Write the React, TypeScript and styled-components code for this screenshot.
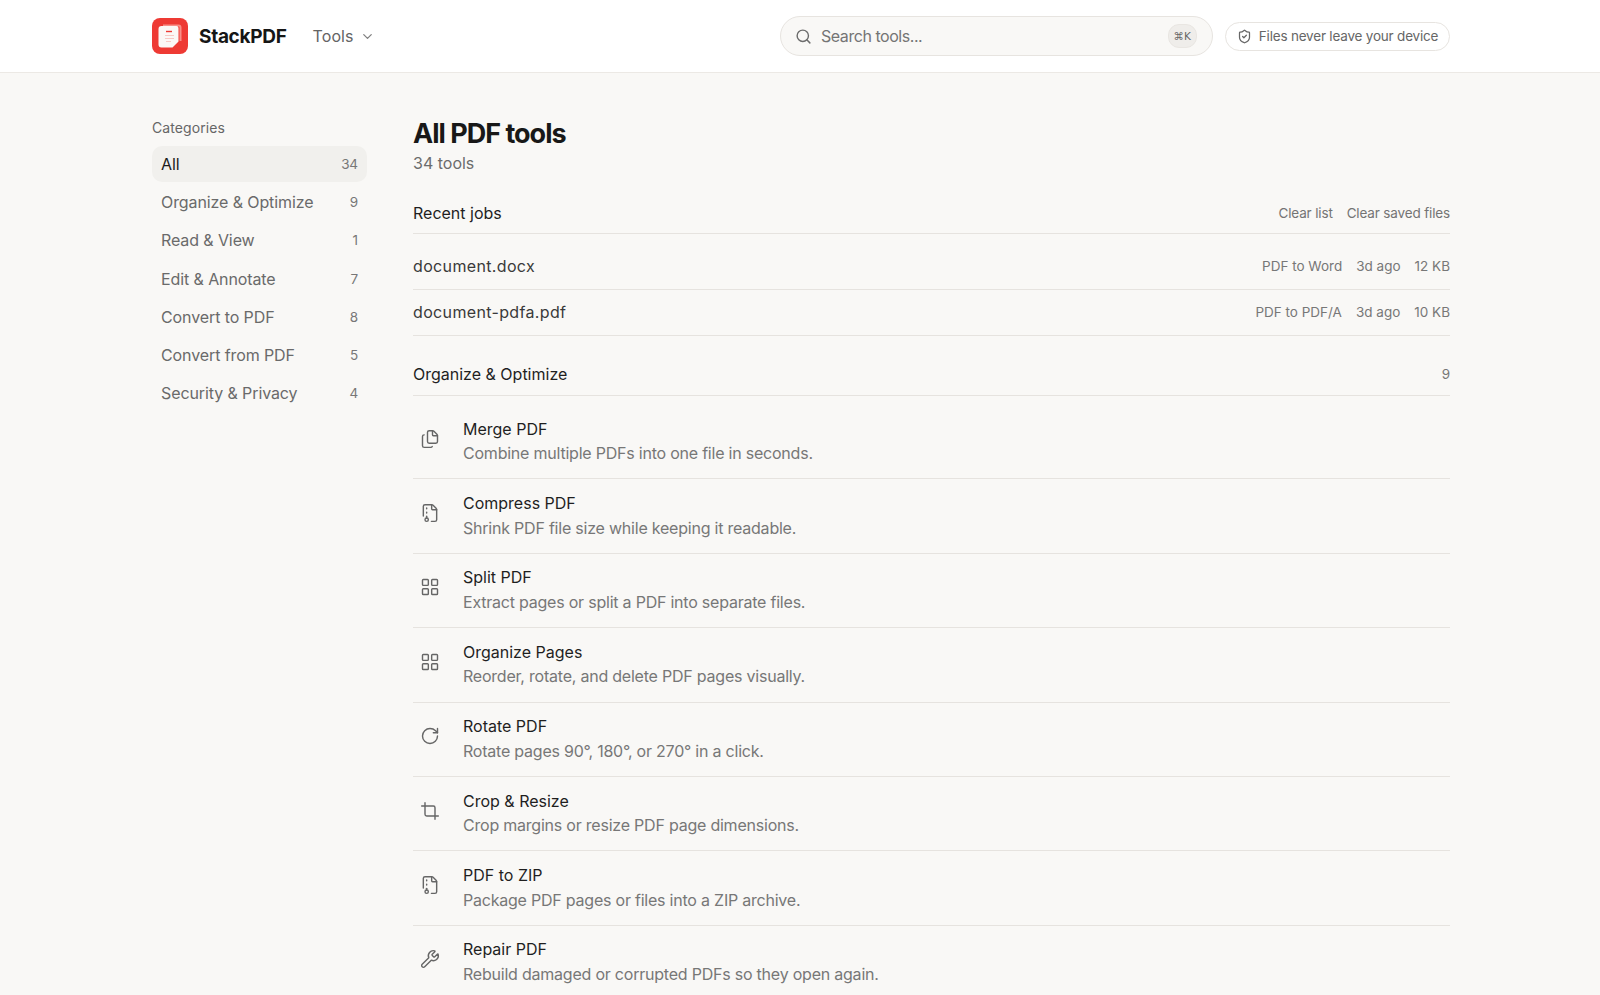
import React from "react";
import styled, { createGlobalStyle } from "styled-components";
import { Files, FileArchive, LayoutGrid, RotateCw, Crop, Wrench, Search, ChevronDown, ShieldCheck } from "lucide-react";

const Global = createGlobalStyle`
  html, body { margin: 0; padding: 0; height: 100%; overflow: hidden; background: #f9f8f6; }
  body { font-family: Inter, "Noto Sans", sans-serif; color: #1c1c1c; }
  #root { height: 995px; overflow: hidden; }
`;
const Header = styled.header`
  height: 73px; box-sizing: border-box; background: #fff; border-bottom: 1px solid #ece9e5;
  display: flex; align-items: center; padding-left: 152px;
`;
const HeaderInner = styled.div`
  width: 1298px; display: flex; align-items: center;
`;
const LogoMark = styled.svg`width: 36px; height: 36px; flex: none;`;
const Brand = styled.span`font-size: 19px; font-weight: 700; letter-spacing: -0.3px; margin-left: 11px; color: #161616;`;
const ToolsMenu = styled.button`
  all: unset; display: flex; align-items: center; gap: 6px; margin-left: 26px; font-size: 16px; color: #646464; letter-spacing: .1px;
`;
const Spacer = styled.div`flex: 1;`;
const SearchBox = styled.div`
  width: 433px; height: 40px; box-sizing: border-box; border: 1px solid #e7e4e0; border-radius: 20px; background: #f9f8f6;
  display: flex; align-items: center; padding: 0 15px 0 14px; color: #6c6c6c;
`;
const SearchText = styled.span`font-size: 16px; margin-left: 9px; flex: 1; color: #747474; letter-spacing: -.45px;`;
const Kbd = styled.span`
  font-family: "DejaVu Sans", sans-serif; font-size: 10.5px; font-weight: 500; color: #666; background: #efedea; border: 1px solid #e9e6e2; border-radius: 11px;
  height: 22px; padding: 0 5px; display: flex; align-items: center;
`;
const TrustPill = styled.div`
  margin-left: 12px; width: 225px; height: 29px; box-sizing: border-box; border: 1px solid #e7e4e0; border-radius: 15px; background: #fff;
  display: flex; align-items: center; justify-content: center; gap: 7px; font-size: 13.5px; letter-spacing: -.2px; color: #666;
`;
const Layout = styled.div`
  width: 1298px; margin-left: 152px; display: grid; grid-template-columns: 215px 1fr; column-gap: 46px; padding-top: 43px;
`;
const Sidebar = styled.aside`display: flex; flex-direction: column;`;
const SideTitle = styled.div`font-size: 14px; color: #666; line-height: 20px; margin-top: 2px; margin-bottom: 8px; letter-spacing: .1px;`;
const SideList = styled.nav`display: flex; flex-direction: column; gap: 2.2px;`;
const SideItem = styled.div<{ $active?: boolean }>`
  height: 36px; display: flex; align-items: center; justify-content: space-between; padding: 0 9px 0 9px; border-radius: 10px;
  font-size: 16px; letter-spacing: -.1px; color: ${p => (p.$active ? "#1c1c1c" : "#6a6a6a")}; background: ${p => (p.$active ? "#f1f0ed" : "transparent")};
`;
const Count = styled.span`font-size: 13.5px; color: #777;`;
const Main = styled.main`display: flex; flex-direction: column;`;
const Title = styled.h1`font-size: 27px; line-height: 36px; font-weight: 700; letter-spacing: -1px; margin: 0; color: #181818;`;
const Sub = styled.div`font-size: 16px; line-height: 24px; color: #6c6c6c; margin-top: -1px;`;
const SectionHead = styled.div<{ $mt: number; $top: number }>`
  margin-top: ${p => p.$mt}px; height: 44px; box-sizing: border-box; border-bottom: 1px solid #e6e3df;
  display: flex; align-items: center; justify-content: space-between; padding-top: ${p => p.$top}px;
`;
const SectionTitle = styled.div`font-size: 16px; color: #1f1f1f;`;
const Actions = styled.div`display: flex; gap: 14px; font-size: 13.5px; letter-spacing: -.15px; color: #747474;`;
const Job = styled.div`
  height: 46.5px; box-sizing: border-box; border-bottom: 1px solid #e6e3df; display: flex; align-items: center; justify-content: space-between;
`;
const FirstJobs = styled.div`padding-top: 9px;`;
const JobName = styled.div`font-size: 16px; letter-spacing: .35px; color: #3a3a3a;`;
const JobMeta = styled.div`display: flex; gap: 14px; font-size: 13.5px; color: #777;`;
const ToolList = styled.div`padding-top: 9px;`;
const Row = styled.div`
  height: 74.4px; box-sizing: border-box; border-bottom: 1px solid #e6e3df; display: flex; align-items: center; padding-left: 7px; gap: 23px;
`;
const IconSlot = styled.div`width: 20px; height: 20px; color: #666; flex: none; display: flex; margin-bottom: 6px;`;
const RowText = styled.div`display: flex; flex-direction: column; padding-bottom: 1.5px;`;
const RowTitle = styled.div`font-size: 16px; line-height: 24px; color: #1f1f1f;`;
const RowDesc = styled.div`font-size: 16px; line-height: 24px; margin-top: .5px; letter-spacing: -.22px; color: #777;`;

const cats: [string, number][] = [["All",34],["Organize & Optimize",9],["Read & View",1],["Edit & Annotate",7],["Convert to PDF",8],["Convert from PDF",5],["Security & Privacy",4]];
const tools: [React.ElementType, string, string][] = [
  [Files,"Merge PDF","Combine multiple PDFs into one file in seconds."],
  [FileArchive,"Compress PDF","Shrink PDF file size while keeping it readable."],
  [LayoutGrid,"Split PDF","Extract pages or split a PDF into separate files."],
  [LayoutGrid,"Organize Pages","Reorder, rotate, and delete PDF pages visually."],
  [RotateCw,"Rotate PDF","Rotate pages 90°, 180°, or 270° in a click."],
  [Crop,"Crop & Resize","Crop margins or resize PDF page dimensions."],
  [FileArchive,"PDF to ZIP","Package PDF pages or files into a ZIP archive."],
  [Wrench,"Repair PDF","Rebuild damaged or corrupted PDFs so they open again."],
];

export default function App() {
  return (
    <>
      <Global />
      <Header>
        <HeaderInner>
          <LogoMark viewBox="0 0 36 36">
            <rect width="36" height="36" rx="8" fill="#ee3a34" />
            <path d="M11 7.5h15.5a2 2 0 0 1 2 2V23" fill="none" stroke="#f98f88" strokeWidth="2" />
            <path d="M6.5 11a3 3 0 0 1 3-3h15a2 2 0 0 1 2 2v13.5l-6 6h-11a3 3 0 0 1-3-3z" fill="#fbf8f6" />
            <path d="M14 13.5h6" stroke="#ee3a34" strokeWidth="1.4" />
            <path d="M13 17.5h9M13 20.5h9M14 23.5h5" stroke="#f8c9c4" strokeWidth="1.1" />
          </LogoMark>
          <Brand>StackPDF</Brand>
          <ToolsMenu>Tools <ChevronDown size={15} color="#808080" /></ToolsMenu>
          <Spacer />
          <SearchBox>
            <Search size={17} />
            <SearchText>Search tools...</SearchText>
            <Kbd>⌘K</Kbd>
          </SearchBox>
          <TrustPill><ShieldCheck size={15} />Files never leave your device</TrustPill>
        </HeaderInner>
      </Header>
      <Layout>
        <Sidebar>
          <SideTitle>Categories</SideTitle>
          <SideList>
            {cats.map(([n, c], i) => (
              <SideItem key={n} $active={i === 0}><span>{n}</span><Count>{c}</Count></SideItem>
            ))}
          </SideList>
        </Sidebar>
        <Main>
          <Title>All PDF tools</Title>
          <Sub>34 tools</Sub>
          <SectionHead $mt={15} $top={3}>
            <SectionTitle>Recent jobs</SectionTitle>
            <Actions><span>Clear list</span><span>Clear saved files</span></Actions>
          </SectionHead>
          <FirstJobs>
            <Job><JobName>document.docx</JobName><JobMeta><span>PDF to Word</span><span>3d ago</span><span>12 KB</span></JobMeta></Job>
            <Job><JobName>document-pdfa.pdf</JobName><JobMeta><span>PDF to PDF/A</span><span>3d ago</span><span>10 KB</span></JobMeta></Job>
          </FirstJobs>
          <SectionHead $mt={16} $top={1}>
            <SectionTitle>Organize &amp; Optimize</SectionTitle>
            <Count>9</Count>
          </SectionHead>
          <ToolList>
            {tools.map(([I, t, d]) => (
              <Row key={t}>
                <IconSlot><I size={20} strokeWidth={1.7} /></IconSlot>
                <RowText><RowTitle>{t}</RowTitle><RowDesc>{d}</RowDesc></RowText>
              </Row>
            ))}
          </ToolList>
        </Main>
      </Layout>
    </>
  );
}
